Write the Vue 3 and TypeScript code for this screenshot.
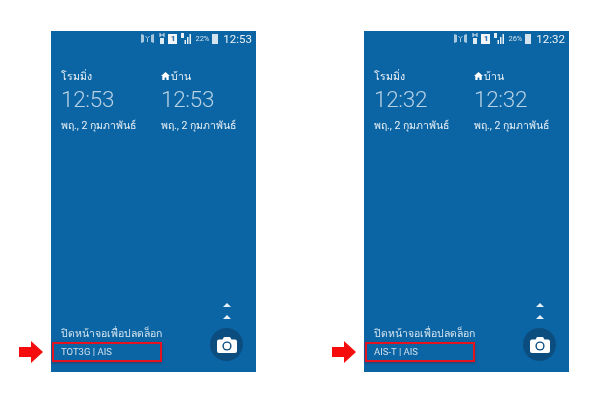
<template>
  <div class="page">
    <div v-for="p in phones" :key="p.time" class="phone">
      <div class="status">
        <svg class="ic-mute" width="13" height="9" viewBox="0 0 13 9"><path d="M0 0l3 1v7l-3 1zM13 0l-3 1v7l3 1z" fill="#cfe0ee"/><path d="M4.500 2l2 2.500 2-2.500M6.500 4.500V8" stroke="#cfe0ee" fill="none"/></svg>
        <svg class="ic-h" width="6" height="11" viewBox="0 0 6 11"><path d="M1 0v4M5 0v4M1 2h4" stroke="#dfeaf3"/><rect x="1" y="5" width="4" height="6" fill="#dfeaf3"/></svg>
        <span class="sim">1</span>
        <svg class="ic-signal" width="11" height="11" viewBox="0 0 11 11"><path d="M3.500 11H5V7H3.500zM6 11h1.500V4H6zM8.500 11H10V1H8.500z" fill="#e8f0f6"/><path d="M0 0h3v5H0z" fill="#e8f0f6"/></svg>
        <span class="pct">{{ p.pct }}</span>
        <span class="battery"></span>
        <span class="clock">{{ p.time }}</span>
      </div>

      <div class="cities">
        <div class="city">
          <div class="name">โรมมิ่ง</div>
          <div class="time">{{ p.time }}</div>
          <div class="date">พฤ., 2 กุมภาพันธ์</div>
        </div>
        <div class="city">
          <div class="name">
            <svg width="9" height="8" viewBox="0 0 9 8"><path d="M4.500 0L9 4H7.700v4H5.400V5.400H3.600V8H1.300V4H0z" fill="#fff"/></svg>บ้าน
          </div>
          <div class="time">{{ p.time }}</div>
          <div class="date">พฤ., 2 กุมภาพันธ์</div>
        </div>
      </div>

      <div class="bottom">
        <div class="unlock">
          <div class="hint">ปิดหน้าจอเพื่อปลดล็อก</div>
          <div class="carrier">{{ p.carrier }}</div>
        </div>
        <div class="shortcut">
          <span class="tri"></span>
          <span class="tri"></span>
          <div class="cam">
            <svg width="20" height="16" viewBox="0 0 20 16">
              <path d="M2 2.500h3.500L7 0h6l1.500 2.500H18a2 2 0 0 1 2 2V14a2 2 0 0 1-2 2H2a2 2 0 0 1-2-2V4.500a2 2 0 0 1 2-2z" fill="#fff"/>
              <circle cx="10" cy="9" r="4.600" fill="#0c4d7f"/>
              <circle cx="10" cy="9" r="3.200" fill="#fff"/>
            </svg>
          </div>
        </div>
      </div>

      <div class="redbox"></div>
      <svg class="arrow" width="24" height="22" viewBox="0 0 24 22"><path d="M0 6h12V0l12 11-12 11v-6H0z" fill="#f50d0d"/></svg>
    </div>
  </div>
</template>

<script setup lang="ts">
interface Phone {
  time: string
  pct: string
  carrier: string
}

const phones: Phone[] = [
  { time: '12:53', pct: '22%', carrier: 'TOT3G | AIS' },
  { time: '12:32', pct: '26%', carrier: 'AIS-T | AIS' },
]
</script>

<style>
body {
  background: #fff;
  overflow: hidden;
}
</style>

<style scoped>
.page {
  display: flex;
  gap: 108px;
  width: 610px;
  height: 403px;
  box-sizing: border-box;
  padding: 31px 0 0 51px;
  font-family: "Roboto", "Noto Sans", "Liberation Sans", sans-serif;
}

.phone {
  position: relative;
  display: flex;
  flex-direction: column;
  width: 205px;
  height: 341px;
  background: #0b64a3;
  color: #fff;
}

.status {
  display: flex;
  align-items: center;
  justify-content: flex-end;
  height: 15px;
  padding: 0 4px 0 0;
  filter: blur(0.5px);
}
.ic-mute { margin-right: 5px; opacity: 0.8; }
.ic-h { margin-right: 3px; }
.sim {
  width: 9px;
  height: 10px;
  margin-right: 4px;
  background: #f2f6fa;
  color: #0b64a3;
  font-size: 8px;
  font-weight: 700;
  line-height: 10px;
  text-align: center;
}
.ic-signal { margin-right: 3px; }
.pct {
  margin-right: 3px;
  font-size: 7.500px;
  color: #d5e3ee;
}
.battery {
  width: 6px;
  height: 10px;
  margin-right: 5px;
  background: #d5e3ee;
}
.clock {
  font-size: 11.500px;
  color: #eef4f8;
}

.cities {
  display: grid;
  grid-template-columns: 100px 100px;
  padding: 23px 0 0 10px;
  filter: blur(0.5px);
}
.name {
  display: flex;
  align-items: center;
  gap: 1px;
  height: 14px;
  font-size: 10.500px;
  color: #eef4f8;
}
.time {
  margin-top: 3px;
  font-family: "Roboto", "Lato", sans-serif;
  font-size: 22.500px;
  font-weight: 300;
  letter-spacing: -0.3px;
  line-height: 26px;
  color: #b7d1e4;
}
.date {
  margin-top: 7px;
  font-size: 10.500px;
  line-height: 14px;
  color: #eaf1f6;
}

.bottom {
  display: flex;
  align-items: flex-end;
  justify-content: space-between;
  margin-top: auto;
  padding: 0 13px 11px 10px;
}
.unlock {
  padding-bottom: 3px;
  filter: blur(0.5px);
}
.hint {
  font-size: 10.500px;
  line-height: 14px;
  color: #d8e6f0;
}
.carrier {
  margin-top: 5px;
  font-size: 9.500px;
  line-height: 12px;
  color: #cfe0ed;
}
.shortcut {
  display: flex;
  flex-direction: column;
  align-items: center;
}
.tri {
  width: 0;
  height: 0;
  margin-bottom: 8px;
  border-left: 4px solid transparent;
  border-right: 4px solid transparent;
  border-bottom: 4px solid #e6eff5;
}
.tri + .tri { margin-bottom: 9px; }
.cam {
  display: flex;
  align-items: center;
  justify-content: center;
  width: 33px;
  height: 33px;
  border-radius: 50%;
  background: #0c4d7f;
}

.redbox {
  position: absolute;
  left: 1px;
  top: 311px;
  width: 106px;
  height: 16px;
  border: 2px solid #e3141f;
  box-shadow: 0 1px 2px rgba(60, 30, 50, 0.5);
}
.arrow {
  position: absolute;
  left: -32px;
  top: 310px;
}
</style>
